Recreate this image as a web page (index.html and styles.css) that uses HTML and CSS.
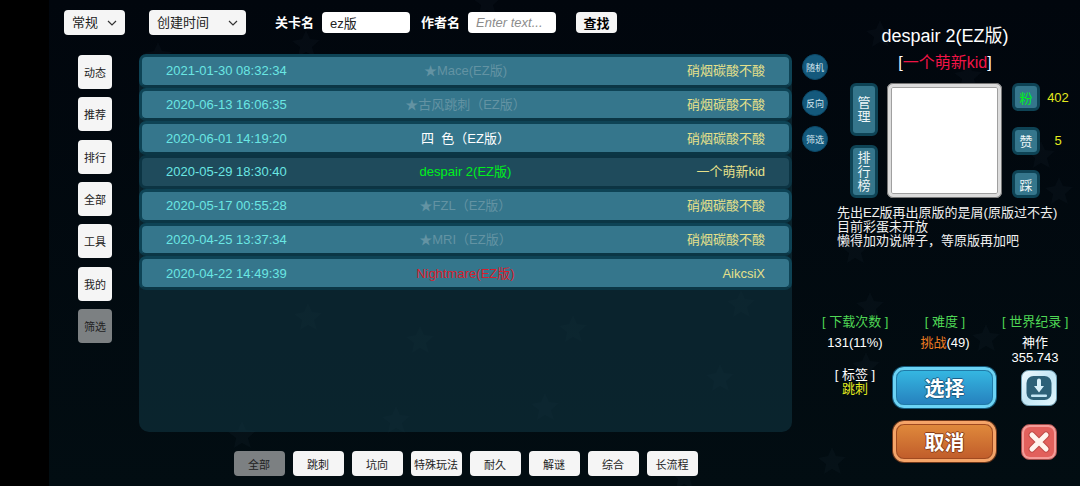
FILE: index.html
```html
<!DOCTYPE html>
<html lang="zh-CN">
<head>
    <meta charset="UTF-8">
    <meta name="viewport" content="width=device-width, initial-scale=1.0">
    <title>关卡列表</title>
    <link rel="stylesheet" href="styles.css">
</head>
<body>

    <div class="app">
        <!-- Background stars -->
        <svg class="stars" viewBox="49 0 1031 486" preserveAspectRatio="xMidYMid slice" aria-hidden="true">
            <defs>
                <path id="star" d="M0-14 L4-5 L14-4 L6 3 L9 13 L0 8 L-8 13 L-6 3 L-14-3 L-4-5 Z"/>
            </defs>
            <use href="#star" x="306" y="44"/>
            <use href="#star" x="487" y="2"/>
            <use href="#star" x="158" y="56"/>
            <use href="#star" x="880" y="34"/>
            <use href="#star" x="968" y="76"/>
            <use href="#star" x="1041" y="155"/>
            <use href="#star" x="1059" y="191"/>
            <use href="#star" x="870" y="306"/>
            <use href="#star" x="986" y="338"/>
            <use href="#star" x="866" y="366"/>
            <use href="#star" x="832" y="461"/>
            <use href="#star" x="855" y="250"/>
            <use href="#star" x="308" y="317"/>
            <use href="#star" x="420" y="340"/>
            <use href="#star" x="396" y="420"/>
            <use href="#star" x="545" y="407"/>
            <use href="#star" x="573" y="329"/>
            <use href="#star" x="741" y="304"/>
            <use href="#star" x="720" y="378"/>
            <use href="#star" x="242" y="435"/>
            <use href="#star" x="684" y="476"/>
        </svg>

        <main class="main">
            <form class="toolbar">
                <div class="select-box select-mode">
                    <select aria-label="模式">
                        <option>常规</option>
                    </select>
                    <svg class="chevron" viewBox="0 0 10 6"><path d="M1 1l4 4 4-4"/></svg>
                </div>
                <div class="select-box select-sort">
                    <select aria-label="排序">
                        <option>创建时间</option>
                    </select>
                    <svg class="chevron" viewBox="0 0 10 6"><path d="M1 1l4 4 4-4"/></svg>
                </div>
                <div class="field">
                    <label for="level-name">关卡名</label>
                    <input type="text" id="level-name" value="ez版">
                </div>
                <div class="field">
                    <label for="author-name">作者名</label>
                    <input type="text" id="author-name" placeholder="Enter text...">
                </div>
                <button type="button" class="search-btn">查找</button>
            </form>

            <div class="content">
                <nav class="side-nav">
                    <button type="button">动态</button>
                    <button type="button">推荐</button>
                    <button type="button">排行</button>
                    <button type="button">全部</button>
                    <button type="button">工具</button>
                    <button type="button">我的</button>
                    <button type="button" class="active">筛选</button>
                </nav>

                <div class="panel">
                    <table class="levels">
                        <tbody>
                            <tr>
                                <td class="date">2021-01-30 08:32:34</td>
                                <td class="name played">★Mace(EZ版)</td>
                                <td class="author">硝烟碳酸不酸</td>
                            </tr>
                            <tr>
                                <td class="date">2020-06-13 16:06:35</td>
                                <td class="name played">★古风跳刺（EZ版）</td>
                                <td class="author">硝烟碳酸不酸</td>
                            </tr>
                            <tr>
                                <td class="date">2020-06-01 14:19:20</td>
                                <td class="name">四  色（EZ版）</td>
                                <td class="author">硝烟碳酸不酸</td>
                            </tr>
                            <tr class="selected">
                                <td class="date">2020-05-29 18:30:40</td>
                                <td class="name green">despair 2(EZ版)</td>
                                <td class="author">一个萌新kid</td>
                            </tr>
                            <tr>
                                <td class="date">2020-05-17 00:55:28</td>
                                <td class="name played">★FZL（EZ版）</td>
                                <td class="author">硝烟碳酸不酸</td>
                            </tr>
                            <tr>
                                <td class="date">2020-04-25 13:37:34</td>
                                <td class="name played">★MRI（EZ版）</td>
                                <td class="author">硝烟碳酸不酸</td>
                            </tr>
                            <tr>
                                <td class="date">2020-04-22 14:49:39</td>
                                <td class="name red">Nightmare(EZ版)</td>
                                <td class="author">AikcsiX</td>
                            </tr>
                        </tbody>
                    </table>
                </div>

                <div class="round-btns">
                    <button type="button">随机</button>
                    <button type="button">反向</button>
                    <button type="button">筛选</button>
                </div>
            </div>

            <div class="tags">
                <button type="button" class="active">全部</button>
                <button type="button">跳刺</button>
                <button type="button">坑向</button>
                <button type="button">特殊玩法</button>
                <button type="button">耐久</button>
                <button type="button">解谜</button>
                <button type="button">综合</button>
                <button type="button">长流程</button>
            </div>
        </main>

        <aside class="detail">
            <h1>despair 2(EZ版)</h1>
            <h2>[<span>一个萌新kid</span>]</h2>

            <div class="preview-row">
                <div class="tall-btns">
                    <button type="button" class="teal-btn">管理</button>
                    <button type="button" class="teal-btn">排行榜</button>
                </div>
                <div class="preview"></div>
                <div class="votes">
                    <button type="button" class="teal-btn fan">粉</button>
                    <span>402</span>
                    <button type="button" class="teal-btn">赞</button>
                    <span>5</span>
                    <button type="button" class="teal-btn">踩</button>
                    <span></span>
                </div>
            </div>

            <p class="description">先出EZ版再出原版的是屑(原版过不去)<br>目前彩蛋未开放<br>懒得加劝说牌子，等原版再加吧</p>

            <div class="stats">
                <div class="stat">
                    <h3>[ 下载次数 ]</h3>
                    <p>131(11%)</p>
                </div>
                <div class="stat">
                    <h3>[ 难度 ]</h3>
                    <p><span class="orange">挑战</span>(49)</p>
                </div>
                <div class="stat">
                    <h3>[ 世界纪录 ]</h3>
                    <p>神作<br>355.743</p>
                </div>
            </div>

            <div class="actions">
                <p class="tag-info">[ 标签 ]<br><span>跳刺</span></p>
                <button type="button" class="big-btn choose">选择</button>
                <button type="button" class="icon-btn" aria-label="下载">
                    <svg viewBox="0 0 36 36">
                        <defs>
                            <linearGradient id="ice" x1="0" y1="0" x2="1" y2="1">
                                <stop offset="0" stop-color="#f1fbff"/>
                                <stop offset="0.5" stop-color="#c3e6f5"/>
                                <stop offset="1" stop-color="#e4f7fd"/>
                            </linearGradient>
                        </defs>
                        <rect x="0.5" y="0.5" width="35" height="35" rx="7" fill="url(#ice)" stroke="#6f9fb3"/>
                        <rect x="5.500" y="6" width="25" height="24" rx="7" fill="#2d6178"/>
                        <path d="M16 10.500a2 2 0 0 1 4 0V16h3L18 22.500 13 16h3z" fill="#d9f1fa"/>
                        <rect x="10" y="24.500" width="16" height="2.500" rx="1" fill="#c3e6f5"/>
                    </svg>
                </button>
                <button type="button" class="big-btn cancel">取消</button>
                <button type="button" class="icon-btn" aria-label="关闭">
                    <svg viewBox="0 0 36 36">
                        <rect x="0.5" y="0.5" width="35" height="35" rx="8" fill="#f59b98" stroke="#a04a48"/>
                        <rect x="3" y="3" width="30" height="30" rx="6" fill="#e2605c"/>
                        <path d="M11 11l14 14M25 11L11 25" stroke="#c04c48" stroke-width="7" stroke-linecap="round"/>
                        <path d="M11 11l14 14M25 11L11 25" stroke="#fff4ee" stroke-width="5" stroke-linecap="round"/>
                    </svg>
                </button>
            </div>
        </aside>
    </div>

</body>
</html>
```
FILE: styles.css
```css
* {
    box-sizing: border-box;
}

body {
    margin: 0;
    background-color: #000;
    color: #fff;
    font-family: "Liberation Sans", "Noto Sans CJK SC", sans-serif;
    font-size: 13px;
    line-height: 15px;
}

button, input, select {
    font-family: inherit;
    font-size: 13px;
    margin: 0;
    padding: 0;
    border: none;
    border-radius: 4px;
    cursor: pointer;
}

button {
    background-color: #f5f5f5;
    color: #222;
}

h1, h2, h3, p {
    margin: 0;
    font-weight: normal;
}

.app {
    position: relative;
    display: flex;
    min-height: 100vh;
    margin-left: 49px;
    background: linear-gradient(#01060d, #020d12);
}

.stars {
    position: absolute;
    top: 0;
    left: 0;
    width: 100%;
    height: 100%;
    fill: rgba(120, 160, 190, 0.04);
    pointer-events: none;
}

.main {
    flex: 1;
    display: flex;
    flex-direction: column;
    position: relative;
    padding: 10px 0;
}

/* Toolbar */
.toolbar {
    display: flex;
    align-items: center;
    padding-left: 15px;
}

.select-box {
    position: relative;
    height: 25px;
}

.select-mode {
    width: 61px;
}

.select-sort {
    width: 97px;
    margin-left: 24px;
}

.select-box select {
    appearance: none;
    width: 100%;
    height: 100%;
    padding-left: 8px;
    background-color: #f5f5f5;
    color: #222;
}

.chevron {
    position: absolute;
    right: 8px;
    top: 10px;
    width: 10px;
    height: 6px;
    fill: none;
    stroke: #333;
    stroke-width: 1.2;
    pointer-events: none;
}

.field {
    display: flex;
    align-items: center;
    gap: 8px;
    margin-left: 11px;
}

.select-box + .field {
    margin-left: 29px;
}

.field label {
    font-weight: bold;
}

.field input {
    width: 88px;
    height: 21px;
    padding: 0 8px;
    background-color: #fff;
    color: #222;
    cursor: text;
}

.field input::placeholder {
    color: #8c8c8c;
    font-style: italic;
}

.search-btn {
    width: 41px;
    height: 21px;
    margin-left: 20px;
    color: #000;
    font-weight: bold;
}

/* List area */
.content {
    flex: 1;
    display: flex;
    margin-top: 19px;
    padding-left: 29px;
}

.side-nav {
    display: flex;
    flex-direction: column;
    justify-content: space-between;
    height: 289px;
    padding-top: 1px;
}

.side-nav button {
    width: 34px;
    height: 34px;
    font-size: 11px;
}

.side-nav .active, .tags .active {
    background-color: #7c8082;
}

.panel {
    flex: 1;
    margin-left: 27px;
    background-color: rgba(18, 56, 70, 0.55);
    border-radius: 10px;
}

.levels {
    width: 100%;
    height: 236px;
    table-layout: fixed;
    border-collapse: separate;
    border-spacing: 0;
}

.levels td {
    padding: 0;
    background-color: #35768c;
    border: 0 solid #0e4355;
    border-top-width: 3px;
    border-bottom: 3px solid #0b3645;
    white-space: pre;
}

.levels .selected td {
    background-color: #1f4b5c;
    border-color: #0c3443;
}

.levels .date {
    padding-left: 24px;
    border-left-width: 3px;
    border-radius: 7px 0 0 7px;
    color: #6ae6e3;
}

.levels .name {
    text-align: center;
}

.levels .author {
    padding-right: 24px;
    border-right-width: 3px;
    border-radius: 0 7px 7px 0;
    color: #e6e08a;
    text-align: right;
}

.levels .played {
    color: #6393a3;
}

.levels .green {
    color: #00f01c;
}

.levels .red {
    color: #d81e2c;
}

.round-btns {
    display: flex;
    flex-direction: column;
    gap: 10px;
    margin-left: 10px;
}

.round-btns button {
    width: 26px;
    height: 26px;
    border: 1px solid #0c4a6a;
    border-radius: 50%;
    background-color: #14597c;
    color: #d5e6ef;
    font-size: 9px;
}

.tags {
    display: flex;
    justify-content: center;
    gap: 8px;
    margin-top: 19px;
    padding-left: 54px;
}

.tags button {
    width: 51px;
    height: 25px;
    font-size: 11px;
}

/* Level detail */
.detail {
    position: relative;
    display: flex;
    flex-direction: column;
    width: 258px;
    margin-left: -6px;
    padding: 24px 12px 24px 0;
    pointer-events: none;
}

.detail button {
    pointer-events: auto;
}

.detail h1 {
    font-size: 18px;
    line-height: 24px;
    text-align: center;
}

.detail h2 {
    margin-top: 4px;
    font-size: 16px;
    line-height: 22px;
    text-align: center;
}

.detail h2 span {
    color: #f01446;
}

.preview-row {
    display: flex;
    margin: 9px -12px 0 28px;
}

.tall-btns {
    display: flex;
    flex-direction: column;
    justify-content: space-between;
    width: 28px;
}

.teal-btn {
    width: 28px;
    height: 28px;
    border: 3px solid #0e4355;
    border-radius: 6px;
    background-color: #35768c;
    color: #eef6f8;
}

.tall-btns .teal-btn {
    height: 53px;
    padding: 0 4px;
    line-height: 14px;
    word-break: break-all;
}

.teal-btn.fan {
    color: #00f01c;
}

.preview {
    width: 115px;
    height: 115px;
    margin: 0 10px 0 9px;
    background-color: #fff;
    border: 4px solid #dcdcdc;
    border-radius: 6px;
    box-shadow: inset 0 0 0 1px #a0a0a0;
    outline: 1px solid #777;
    outline-offset: -1px;
}

.votes {
    display: grid;
    grid-template-columns: 28px 36px;
    align-content: space-between;
    align-items: center;
    text-align: center;
    color: #e4ea1e;
}

.description {
    margin-top: 8px;
    padding-left: 15px;
    line-height: 14px;
    white-space: nowrap;
    color: #f0f0f0;
}

.stats {
    display: grid;
    grid-template-columns: 66px 103px 66px;
    justify-content: space-between;
    margin-top: auto;
    text-align: center;
    white-space: nowrap;
}

.stat h3 {
    margin-bottom: 6px;
    font-size: 13px;
    color: #4fd755;
}

.orange {
    color: #ee7d22;
}

.actions {
    display: grid;
    grid-template-columns: 66px 103px 56px;
    grid-template-rows: 41px 41px;
    column-gap: 5px;
    row-gap: 13px;
    align-items: center;
    justify-items: end;
    margin-top: 2px;
}

.tag-info {
    justify-self: center;
    align-self: start;
    padding-top: 1px;
    line-height: 14px;
    text-align: center;
}

.tag-info span {
    color: #e4ea1e;
}

.big-btn {
    grid-column: 2;
    width: 100%;
    height: 41px;
    border: 3px solid;
    border-radius: 11px;
    color: #fff;
    font-size: 20px;
    font-weight: bold;
}

.choose {
    border-color: #6bd3f5;
    background: linear-gradient(#35b8e2, #2680bd);
    background-clip: padding-box;
    box-shadow: inset 0 0 0 1px #1f7aa8, 0 0 0 1px #155a7c;
    text-shadow: 1px 0 #1c5e86, -1px 0 #1c5e86, 0 1px #1c5e86, 0 -1px #1c5e86;
}

.cancel {
    border-color: #f5a468;
    background: linear-gradient(#e08a3c, #c05c2a);
    background-clip: padding-box;
    box-shadow: inset 0 0 0 1px #a04a20, 0 0 0 1px #70381a;
    text-shadow: 1px 0 #8a3c18, -1px 0 #8a3c18, 0 1px #8a3c18, 0 -1px #8a3c18;
}

.icon-btn {
    width: 36px;
    height: 36px;
    background: none;
}

.icon-btn svg {
    display: block;
    width: 36px;
    height: 36px;
    fill: none;
}
```
